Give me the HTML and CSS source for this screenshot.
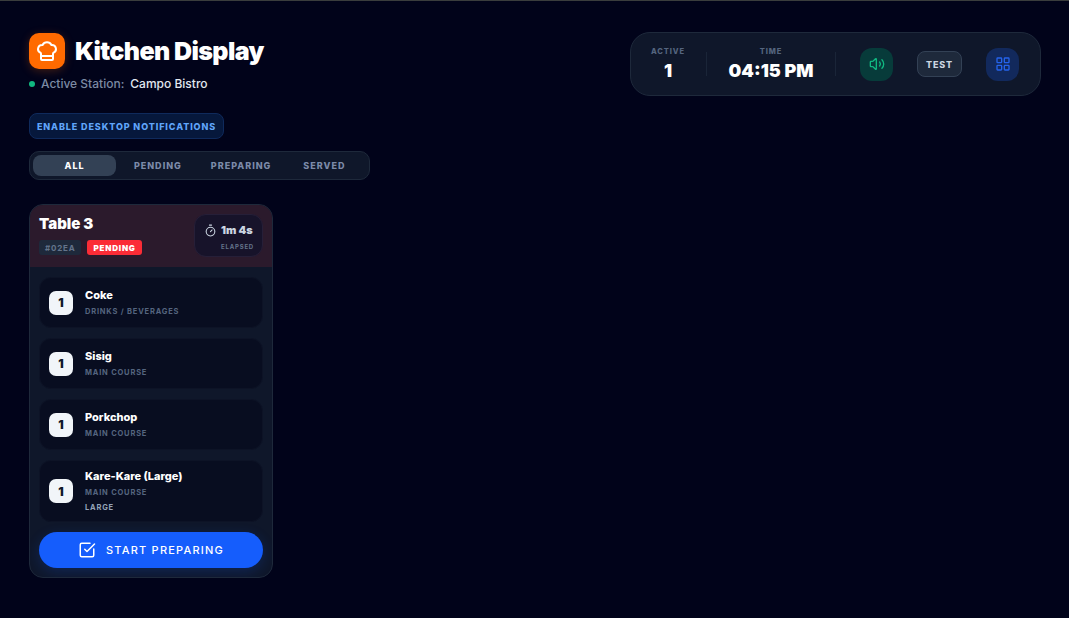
FILE: index.html
```html
<!DOCTYPE html>
<html lang="en">
<head>
    <meta charset="UTF-8">
    <meta name="viewport" content="width=device-width, initial-scale=1.0">
    <title>Kitchen Display</title>
    <link rel="stylesheet" href="styles.css">
</head>
<body>
    <div class="page">
        <header class="top-row">
            <div class="left-col">
                <div class="brand">
                    <div class="brand-icon">
                        <svg width="24" height="24" viewBox="0 0 24 24" fill="none" stroke="#fff" stroke-width="2" stroke-linecap="round" stroke-linejoin="round">
                            <path d="M17 21a1 1 0 0 0 1-1v-5.35c0-.46.31-.85.73-1.06A4 4 0 0 0 17 6h-.56a5 5 0 0 0-8.88 0H7a4 4 0 0 0-1.73 7.59c.42.21.73.6.73 1.06V20a1 1 0 0 0 1 1z"/>
                            <path d="M6 17h12"/>
                        </svg>
                    </div>
                    <h1>Kitchen Display</h1>
                </div>
                <div class="station">
                    <span class="dot"></span>
                    <span class="station-label">Active Station:</span>
                    <span class="station-name">Campo Bistro</span>
                </div>
                <button class="notify-btn">ENABLE DESKTOP NOTIFICATIONS</button>
                <div class="tabs">
                    <div class="tab active">ALL</div>
                    <div class="tab">PENDING</div>
                    <div class="tab">PREPARING</div>
                    <div class="tab">SERVED</div>
                </div>
            </div>
            <div class="stats">
                <div class="stat stat-active">
                    <div class="stat-label">ACTIVE</div>
                    <div class="stat-value">1</div>
                </div>
                <div class="stat-divider"></div>
                <div class="stat stat-time">
                    <div class="stat-label">TIME</div>
                    <div class="stat-value">04:15 PM</div>
                </div>
                <div class="stat-divider"></div>
                <div class="icon-btn sound">
                    <svg width="16" height="16" viewBox="0 0 24 24" fill="none" stroke="#10b981" stroke-width="2" stroke-linecap="round" stroke-linejoin="round">
                        <path d="M11 4.7a.7.7 0 0 0-1.2-.5L6.4 7.6A1.4 1.4 0 0 1 5.4 8H3a1 1 0 0 0-1 1v6a1 1 0 0 0 1 1h2.4a1.4 1.4 0 0 1 1 .4l3.4 3.4a.7.7 0 0 0 1.2-.5z"/>
                        <path d="M16 9a5 5 0 0 1 0 6"/>
                        <path d="M19.4 18.4a9 9 0 0 0 0-12.8"/>
                    </svg>
                </div>
                <button class="test-btn">TEST</button>
                <div class="icon-btn grid">
                    <svg width="16" height="16" viewBox="0 0 24 24" fill="none" stroke="#2563eb" stroke-width="2" stroke-linecap="round" stroke-linejoin="round">
                        <rect x="3" y="3" width="7" height="7" rx="1"/>
                        <rect x="14" y="3" width="7" height="7" rx="1"/>
                        <rect x="14" y="14" width="7" height="7" rx="1"/>
                        <rect x="3" y="14" width="7" height="7" rx="1"/>
                    </svg>
                </div>
            </div>
        </header>

        <div class="order-card">
            <div class="order-head">
                <div>
                    <div class="order-table">Table 3</div>
                    <div class="order-tags">
                        <span class="tag-id">#02EA</span>
                        <span class="tag-status">PENDING</span>
                    </div>
                </div>
                <div class="timer">
                    <div class="timer-top">
                        <svg width="13" height="13" viewBox="0 0 24 24" fill="none" stroke="#cbd5e1" stroke-width="2" stroke-linecap="round" stroke-linejoin="round">
                            <line x1="10" y1="2" x2="14" y2="2"/>
                            <line x1="12" y1="14" x2="15" y2="11"/>
                            <circle cx="12" cy="14" r="8"/>
                        </svg>
                        <span class="timer-value">1m 4s</span>
                    </div>
                    <div class="timer-label">ELAPSED</div>
                </div>
            </div>
            <div class="order-body">
                <div class="item">
                    <div class="qty">1</div>
                    <div>
                        <div class="item-name">Coke</div>
                        <div class="item-cat">DRINKS / BEVERAGES</div>
                    </div>
                </div>
                <div class="item">
                    <div class="qty">1</div>
                    <div>
                        <div class="item-name">Sisig</div>
                        <div class="item-cat">MAIN COURSE</div>
                    </div>
                </div>
                <div class="item">
                    <div class="qty">1</div>
                    <div>
                        <div class="item-name">Porkchop</div>
                        <div class="item-cat">MAIN COURSE</div>
                    </div>
                </div>
                <div class="item">
                    <div class="qty">1</div>
                    <div>
                        <div class="item-name">Kare-Kare (Large)</div>
                        <div class="item-cat">MAIN COURSE</div>
                        <div class="item-note">LARGE</div>
                    </div>
                </div>
                <button class="start-btn">
                    <svg width="18" height="18" viewBox="0 0 24 24" fill="none" stroke="#fff" stroke-width="2" stroke-linecap="round" stroke-linejoin="round">
                        <path d="M21 10.5V19a2 2 0 0 1-2 2H5a2 2 0 0 1-2-2V5a2 2 0 0 1 2-2h11"/>
                        <path d="M9 11l3 3L22 4"/>
                    </svg>
                    START PREPARING
                </button>
            </div>
        </div>
    </div>
</body>
</html>
```

FILE: styles.css
```css
* {
    box-sizing: border-box;
}
html, body {
    height: 100%;
}
body {
    font-family: 'Inter', sans-serif;
    background-color: #020617;
    background: #01031a;
    color: #fff;
    margin: 0;
    padding: 0;
    border-top: 1px solid #3a3d3d;
    overflow: hidden;
}
button {
    font-family: inherit;
    cursor: pointer;
}
.page {
    padding: 31px 28px 0 29px;
}
.top-row {
    display: flex;
    justify-content: space-between;
    align-items: flex-start;
}
.left-col {
    width: 341px;
}
.brand {
    display: flex;
    align-items: center;
    gap: 10px;
    margin-top: 1px;
}
.brand-icon {
    width: 36px;
    height: 36px;
    border-radius: 10px;
    background-color: #ff6a00;
    box-shadow: 0 2px 10px rgba(255, 106, 0, 0.25);
    display: flex;
    align-items: center;
    justify-content: center;
}
h1 {
    font-size: 25px;
    font-weight: 900;
    letter-spacing: -0.6px;
    margin: 0;
    line-height: 36px;
}
.station {
    display: flex;
    align-items: center;
    margin-top: 6px;
    font-size: 12px;
    line-height: 18px;
}
.dot {
    width: 6px;
    height: 6px;
    border-radius: 50%;
    background-color: #10b981;
    margin-right: 6px;
}
.station-label {
    color: #7c8aa3;
    font-weight: 500;
    margin-right: 6px;
}
.station-name {
    color: #e2e8f0;
    font-weight: 500;
}
.notify-btn {
    display: block;
    margin-top: 20px;
    height: 26px;
    width: 195px;
    padding: 0;
    background-color: #06183c;
    border: 1px solid #0f2a5c;
    border-radius: 8px;
    color: #60a5fa;
    font-size: 9px;
    font-weight: 800;
    letter-spacing: 0.9px;
}
.tabs {
    display: flex;
    margin-top: 12px;
    height: 29px;
    padding: 3px;
    background-color: #0f172a;
    border: 1px solid #1e293b;
    border-radius: 10px;
}
.tab {
    flex: 1;
    display: flex;
    align-items: center;
    justify-content: center;
    border-radius: 8px;
    color: #7c8aa8;
    font-size: 9px;
    font-weight: 800;
    letter-spacing: 1px;
}
.tab.active {
    background-color: #334155;
    color: #fff;
}
.stats {
    display: flex;
    align-items: center;
    width: 411px;
    height: 64px;
    background-color: #0f172a;
    border: 1px solid #1e293b;
    border-radius: 20px;
    padding: 0 18px;
}
.stat {
    text-align: center;
}
.stat-active {
    width: 38px;
    margin-right: 19px;
}
.stat-time {
    width: 88px;
    margin: 0 20px 0 20px;
}
.stat-label {
    color: #55657f;
    font-size: 7.5px;
    font-weight: 800;
    letter-spacing: 0.9px;
    line-height: 10px;
}
.stat-value {
    font-size: 18px;
    font-weight: 900;
    line-height: 22px;
    margin-top: 3px;
    white-space: nowrap;
}
.stat-divider {
    width: 1px;
    height: 24px;
    background-color: #1a2538;
}
.icon-btn {
    width: 33px;
    height: 33px;
    border-radius: 12px;
    display: flex;
    align-items: center;
    justify-content: center;
}
.icon-btn.sound {
    background-color: #073b3a;
    margin-left: 24px;
}
.icon-btn.grid {
    background-color: #12295c;
}
.test-btn {
    width: 45px;
    height: 26px;
    margin: 0 24px;
    padding: 0;
    background-color: #1e293b;
    border: 1px solid #334155;
    border-radius: 8px;
    color: #cbd5e1;
    font-size: 9px;
    font-weight: 800;
    letter-spacing: 0.9px;
}
.order-card {
    width: 244px;
    margin-top: 24px;
    background-color: #0f172a;
    border: 1px solid #1e293b;
    border-radius: 14px;
    overflow: hidden;
}
.order-head {
    display: flex;
    justify-content: space-between;
    height: 62px;
    padding: 9px 9px 0 9px;
    background-color: #2b1a2c;
}
.order-table {
    font-size: 15px;
    font-weight: 900;
    line-height: 20px;
}
.order-tags {
    display: flex;
    gap: 6px;
    margin-top: 6px;
}
.tag-id {
    display: flex;
    align-items: center;
    height: 15px;
    padding: 0 6px;
    background-color: #1e293b;
    border-radius: 3px;
    color: #64748b;
    font-size: 8px;
    font-weight: 700;
    letter-spacing: 0.8px;
}
.tag-status {
    display: flex;
    align-items: center;
    height: 15px;
    padding: 0 6px;
    background-color: #fb2c36;
    border-radius: 3px;
    font-size: 8px;
    font-weight: 900;
    letter-spacing: 0.8px;
}
.timer {
    width: 69px;
    height: 43px;
    background-color: #17132a;
    border: 1px solid #261f38;
    border-radius: 12px;
    padding: 8px 8px 0 9px;
    text-align: right;
}
.timer-top {
    display: flex;
    align-items: center;
    gap: 4px;
}
.timer-value {
    color: #cbd5e1;
    font-size: 11px;
    font-weight: 900;
    line-height: 14px;
}
.timer-label {
    color: #64748b;
    font-size: 6px;
    font-weight: 700;
    letter-spacing: 0.8px;
    margin-top: 6px;
}
.order-body {
    padding: 10px 9px 9px 9px;
    display: flex;
    flex-direction: column;
    gap: 10px;
}
.item {
    display: flex;
    align-items: center;
    gap: 12px;
    min-height: 51px;
    padding: 8px 9px;
    background-color: #080d20;
    border: 1px solid #0d1326;
    border-radius: 12px;
}
.qty {
    flex: none;
    width: 24px;
    height: 24px;
    border-radius: 7px;
    background-color: #f1f5f9;
    color: #0f172a;
    font-size: 12px;
    font-weight: 900;
    display: flex;
    align-items: center;
    justify-content: center;
}
.item-name {
    font-size: 11px;
    font-weight: 800;
    line-height: 14px;
}
.item-cat {
    color: #55657f;
    font-size: 7.5px;
    font-weight: 700;
    letter-spacing: 0.8px;
    line-height: 10px;
    margin-top: 5px;
}
.item-note {
    color: #94a3b8;
    font-size: 7.5px;
    font-weight: 700;
    letter-spacing: 0.8px;
    line-height: 10px;
    margin-top: 5px;
}
.start-btn {
    display: flex;
    align-items: center;
    justify-content: center;
    gap: 10px;
    height: 36px;
    margin-top: 0;
    padding: 0;
    background-color: #155dfc;
    border: none;
    border-radius: 18px;
    box-shadow: 0 4px 14px rgba(21, 93, 252, 0.2);
    color: #fff;
    font-size: 11px;
    font-weight: 500;
    letter-spacing: 1.2px;
}
```
